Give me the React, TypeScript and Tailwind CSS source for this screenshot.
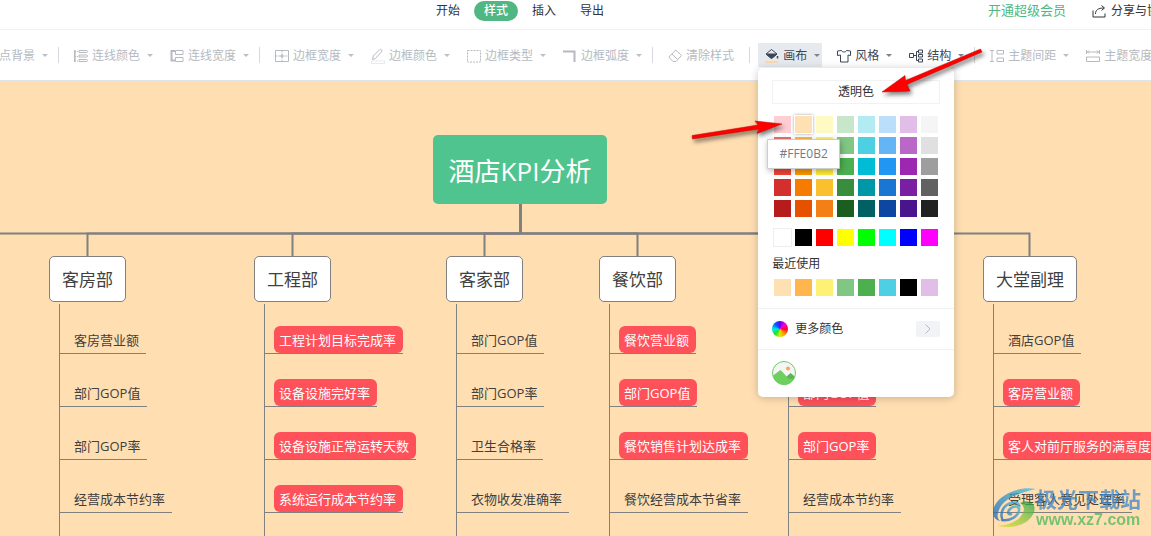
import type { ReactNode } from 'react';
import clsx from 'clsx';

const tabs = ['开始', '样式', '插入', '导出'];

const palette = [
  'bg-[#ffcdd2]', 'bg-[#ffe0b2]', 'bg-[#fff9c4]', 'bg-[#c8e6c9]', 'bg-[#b2ebf2]', 'bg-[#bbdefb]', 'bg-[#e1bee7]', 'bg-[#f5f5f5]',
  'bg-[#e57373]', 'bg-[#ffb74d]', 'bg-[#fff176]', 'bg-[#81c784]', 'bg-[#4dd0e1]', 'bg-[#64b5f6]', 'bg-[#ba68c8]', 'bg-[#e0e0e0]',
  'bg-[#f44336]', 'bg-[#ff9800]', 'bg-[#ffeb3b]', 'bg-[#4caf50]', 'bg-[#00bcd4]', 'bg-[#2196f3]', 'bg-[#9c27b0]', 'bg-[#9e9e9e]',
  'bg-[#d32f2f]', 'bg-[#f57c00]', 'bg-[#fbc02d]', 'bg-[#388e3c]', 'bg-[#0097a7]', 'bg-[#1976d2]', 'bg-[#7b1fa2]', 'bg-[#616161]',
  'bg-[#b71c1c]', 'bg-[#e65100]', 'bg-[#f57f17]', 'bg-[#1b5e20]', 'bg-[#006064]', 'bg-[#0d47a1]', 'bg-[#4a148c]', 'bg-[#212121]',
];

const basics = [
  'bg-[#ffffff]', 'bg-[#000000]', 'bg-[#ff0000]', 'bg-[#ffff00]', 'bg-[#00ff00]', 'bg-[#00ffff]', 'bg-[#0000ff]', 'bg-[#ff00ff]',
];

const recent = [
  'bg-[#ffe0b2]', 'bg-[#ffb74d]', 'bg-[#fff176]', 'bg-[#81c784]', 'bg-[#4caf50]', 'bg-[#4dd0e1]', 'bg-[#000000]', 'bg-[#e1bee7]',
];

type Leaf = { text: string; hot?: boolean };
type Branch = { pos: string; title?: string; leaves: Leaf[] };

const branches: Branch[] = [
  {
    pos: 'left-[49px]',
    title: '客房部',
    leaves: [{ text: '客房营业额' }, { text: '部门GOP值' }, { text: '部门GOP率' }, { text: '经营成本节约率' }],
  },
  {
    pos: 'left-[254px]',
    title: '工程部',
    leaves: [
      { text: '工程计划目标完成率', hot: true },
      { text: '设备设施完好率', hot: true },
      { text: '设备设施正常运转天数', hot: true },
      { text: '系统运行成本节约率', hot: true },
    ],
  },
  {
    pos: 'left-[446px]',
    title: '客家部',
    leaves: [{ text: '部门GOP值' }, { text: '部门GOP率' }, { text: '卫生合格率' }, { text: '衣物收发准确率' }],
  },
  {
    pos: 'left-[599px]',
    title: '餐饮部',
    leaves: [
      { text: '餐饮营业额', hot: true },
      { text: '部门GOP值', hot: true },
      { text: '餐饮销售计划达成率', hot: true },
      { text: '餐饮经营成本节省率' },
    ],
  },
  {
    pos: 'left-[778px]',
    leaves: [{ text: '部门GOP值', hot: true }, { text: '部门GOP率', hot: true }, { text: '经营成本节约率' }],
  },
  {
    pos: 'left-[983px]',
    title: '大堂副理',
    leaves: [
      { text: '酒店GOP值' },
      { text: '客房营业额', hot: true },
      { text: '客人对前厅服务的满意度', hot: true },
      { text: '受理客人意见处理率' },
    ],
  },
];

// x of every branch's drop line
const drops = [-60, 87.5, 292.5, 484.5, 637.5, 816.5, 1029.5];

function Icon({ children }: { children: ReactNode }) {
  return (
    <svg className="h-[14px] w-[14px] shrink-0 overflow-visible" viewBox="0 0 14 14" fill="none" stroke="currentColor" aria-hidden="true">
      {children}
    </svg>
  );
}

const icons = {
  background: <path d="M1 1.5h12v11H1z" />,
  lineColor: (
    <>
      <path d="M.8 1v12" strokeWidth="1.600" />
      <path d="M1 2.500h4M1 7.500h4M1 12h4" strokeDasharray="1 1" />
      <path d="M5 1.500h7.500q1 0 1 1t-1 1H5zM5 6h7.500q1 0 1 1t-1 1H5zM5 10.500h7.500q1 0 1 1t-1 1H5z" />
    </>
  ),
  lineWidth: (
    <>
      <path d="M5 2H1.500v9.500H5" strokeWidth="2" />
      <path d="M5.500 1.500H13v4H5.500zM5.500 8.500H13v4H5.500z" />
    </>
  ),
  borderWidth: (
    <>
      <path d="M.5 1.500h13v11H.5z" />
      <path d="M7 1.500v11M.5 7h13" strokeDasharray="2 1" />
      <path d="M5 7h4M7 5v4" />
    </>
  ),
  borderColor: (
    <>
      <path d="M1.500 10.500l.8-3.500L8.500.800a1.400 1.400 0 0 1 2 2L4.500 9.500z" />
      <path d="M.5 12h13v2.500H.5z" opacity="0.300" />
    </>
  ),
  borderType: <path d="M.5 1.500h13v11.500H.5z" strokeDasharray="2 1" />,
  borderArc: <path d="M0 2.500h11.500V13" strokeWidth="2" />,
  clear: (
    <>
      <path d="M7.800 1l5.700 5.500L8 12.500H5L.8 8z" />
      <path d="M4 5l5.500 5.500" />
    </>
  ),
  canvas: (
    <>
      <path d="M1 5L6.500.5l5.500 4.500L6.500 9.500z" />
      <path d="M1 5h11L6.500 9.500z" fill="currentColor" />
      <path d="M12.500 7v2.500" strokeWidth="1.500" />
      <path d="M0 13h13" stroke="#ffd9a3" strokeWidth="2" />
    </>
  ),
  shirt: <path d="M4.500 1.500L.5 2v4.500l3-.5v7h7.500V6l2.500.5V2l-4-.5C9 3.500 5 3.500 4.500 1.500z" strokeLinejoin="round" />,
  structure: (
    <path d="M.5 4.500h4v4h-4zM4.500 6.500h3M7.500 2.500v9M7.500 2.500h2M7.500 11.500h2M9.500 1h4v3h-4zM9.500 5.500h4v2.500h-4zM9.500 10h4v3h-4z" />
  ),
  spacing: (
    <>
      <path d="M0 1.500h4M0 12.500h4M2 2v10" />
      <path d="M7 1.500h6.500v3.500H7zM7 9h6.500v3.500H7z" />
    </>
  ),
  width: (
    <>
      <path d="M.5 1v4M13.500 1v4M1 3h12M3 1.500L1.500 3 3 4.500M11 1.500L12.500 3 11 4.500" />
      <path d="M.5 8h13v4.500H.5z" />
    </>
  ),
};

function ToolButton({
  icon,
  label,
  caret = true,
  active,
  enabled,
}: {
  icon: ReactNode;
  label: string;
  caret?: boolean;
  active?: boolean;
  enabled?: boolean;
}) {
  return (
    <button
      type="button"
      className={clsx(
        'flex h-6 shrink-0 items-center pt-px pl-[7px]',
        caret ? 'pr-[2px]' : 'pr-[7px]',
        active && 'bg-[#e6eaee]',
        enabled ? 'text-[#3d4656]' : 'text-[#b6babf]',
      )}
    >
      <Icon>{icon}</Icon>
      <span className="ml-1">{label}</span>
      {caret && (
        <svg
          className={clsx('ml-[7px] h-[3px] w-[6px]', enabled ? 'text-[#7d838d]' : 'text-[#bcc0c5]')}
          viewBox="0 0 6 3"
          fill="currentColor"
          aria-hidden="true"
        >
          <path d="M0 0h6L3 3z" />
        </svg>
      )}
    </button>
  );
}

function Divider() {
  return <span className="h-4 w-px shrink-0 bg-[#d5d8dc]" />;
}

function Swatches({ colors, label, selected }: { colors: string[]; label: string; selected?: number }) {
  return (
    <div className="grid grid-cols-8 gap-1 px-[2px]" role="group" aria-label={label}>
      {colors.map((color, i) => (
        <button
          key={color}
          type="button"
          aria-label={color.slice(4, -1)}
          className={clsx(
            'h-[17px]',
            color,
            color === 'bg-[#ffffff]' && 'outline outline-[#eeeeee]',
            selected === i && 'shadow-[0_0_3px_1px_rgba(0,0,0,0.35)] outline outline-white',
          )}
        />
      ))}
    </div>
  );
}

function CanvasPanel() {
  return (
    <div className="absolute top-[25px] left-0 w-[196px] rounded-[5px] bg-white text-[#333333] shadow-[0_1px_8px_rgba(0,0,0,0.22)]">
      <div className="px-[14px] pt-3 pb-3">
        <button type="button" className="mb-3 block h-6 w-full border border-[#f2f2f2] leading-[22px]">
          透明色
        </button>
        <Swatches colors={palette} label="颜色" selected={1} />
        <div className="mt-3">
          <Swatches colors={basics} label="标准色" />
        </div>
        <h3 className="mt-2 mb-[5px] leading-5">最近使用</h3>
        <Swatches colors={recent} label="最近使用" />
      </div>
      <button type="button" className="flex h-[41px] w-full items-center border-t border-[#f0f1f2] px-[14px]">
        <span className="h-4 w-4 rounded-full bg-[conic-gradient(#5a00ff,#ff00d0,#ff0030,#ff9000,#d8f000,#20e030,#00e8e0,#0060ff,#5a00ff)]" />
        <span className="ml-[7px]">更多颜色</span>
        <span className="ml-auto flex h-4 w-6 items-center justify-center rounded-[2px] bg-[#f1f3f6]">
          <svg className="h-[10px] w-[6px]" viewBox="0 0 6 10" fill="none" stroke="#b5bac2" aria-hidden="true">
            <path d="M.5.5L5 5 .5 9.500" />
          </svg>
        </span>
      </button>
      <div className="border-t border-[#f0f1f2] px-[14px] pt-[11px] pb-3">
        <button type="button" aria-label="图片" className="block h-6 w-6">
          <svg viewBox="0 0 24 24" aria-hidden="true">
            <defs>
              <clipPath id="photo">
                <circle cx="12" cy="12" r="11.500" />
              </clipPath>
            </defs>
            <g clipPath="url(#photo)">
              <path d="M0 0h24v24H0z" fill="#f5f5f5" />
              <path d="M13 17l5.500-5 6 5v8H13z" fill="#5bb653" />
              <path d="M-1 16l9.500-7L19 20v5H-1z" fill="#6ccf60" />
              <path d="M0 18h24v6H0z" fill="#6ccf60" />
              <circle cx="16" cy="7.500" r="2" fill="#f9a36b" />
            </g>
            <circle cx="12" cy="12" r="11.500" fill="none" stroke="#6ccf60" />
          </svg>
        </button>
      </div>
      <div
        role="tooltip"
        className="absolute top-[71px] left-[9px] flex h-[30px] w-[73px] items-center justify-center rounded-[1px] border border-[#cccccc] bg-white text-[#737a87] shadow-[1px_2px_6px_rgba(0,0,0,0.3)]"
      >
        #FFE0B2
      </div>
    </div>
  );
}

function BranchNode({ pos, title, leaves }: Branch) {
  return (
    <section className={clsx('absolute top-[175px] bottom-0 flex flex-col items-start whitespace-nowrap', pos)}>
      <h2
        className={clsx(
          'flex h-[46px] shrink-0 items-center px-3 pt-[2px] text-[17px]',
          title && 'rounded-[5px] border border-[#808080] bg-white',
        )}
      >
        {title}
      </h2>
      <ul
        className={clsx(
          'mt-[2px] ml-[10px] flex flex-1 flex-col items-start gap-[25px] border-l border-[#808080] text-[13px]',
          title ? 'pt-[22px]' : 'pt-[75px]',
        )}
      >
        {leaves.map((leaf) => (
          <li key={leaf.text} className="border-b border-[#808080] pl-[9px]">
            <span
              className={clsx(
                'block h-[27px] pr-[7px] pl-[5px] leading-7',
                leaf.hot && 'rounded-[6px] bg-[#ff515a] text-white',
              )}
            >
              {leaf.text}
            </span>
          </li>
        ))}
      </ul>
    </section>
  );
}

function Watermark() {
  return (
    <div className="absolute right-[10px] bottom-[7px] flex items-center opacity-75">
      <svg className="h-[42px] w-[44px]" viewBox="0 0 44 42" aria-hidden="true">
        <defs>
          <linearGradient id="wmBlue" x1="0" y1="1" x2="1" y2="0">
            <stop offset="0" stopColor="#1d62b5" />
            <stop offset="1" stopColor="#45c0e0" />
          </linearGradient>
          <linearGradient id="wmGreen" x1="0" y1="1" x2="1" y2="0">
            <stop offset="0" stopColor="#e8dc30" />
            <stop offset="0.600" stopColor="#7cc142" />
            <stop offset="1" stopColor="#1f9e50" />
          </linearGradient>
        </defs>
        <path d="M44 2C27-1 9 7 3 18c-4 8-2 14 5 16-2-2-3-4-2-8C8 17 17 10 27 7c6-2 11-4 17-5z" fill="url(#wmBlue)" />
        <path
          d="M10 33c8 1 15-3 17-9 1-5-5-6-9-2-3 3-2 6 1 5M10 31c-2-6 2-13 9-15 6-2 9 1 8 5"
          fill="none"
          stroke="url(#wmBlue)"
          strokeWidth="2.500"
          strokeLinecap="round"
        />
        <path d="M28 16c4-3 10-2 13 1 4 5 0 13-7 18-8 5-19 6-29 4 12-1 20-4 24-10 4-5 4-10-1-13z" fill="url(#wmGreen)" />
      </svg>
      <div className="flex flex-col">
        <strong className="text-[21px] leading-6 font-bold text-[#3f86cb]">极光下载站</strong>
        <span className="font-['Liberation_Sans',sans-serif] text-[16px] leading-[18px] font-bold text-[#4cb860]">www.xz7.com</span>
      </div>
    </div>
  );
}

function Arrows() {
  return (
    <svg
      className="pointer-events-none absolute inset-0 z-20 h-full w-full drop-shadow-[2px_3px_2px_rgba(0,0,0,0.5)]"
      fill="#ff0000"
      stroke="#b80808"
      strokeWidth="0.500"
      strokeLinejoin="round"
      aria-hidden="true"
    >
      <path d="M882 92L905 75.500L905.500 80.500L980.500 49L982 52L907 84.500L910 91Z" />
      <path d="M782 124L755 121L758 125L692 135.500L692.500 139L759 129L757 133.500Z" />
    </svg>
  );
}

export default function App() {
  return (
    <div className="relative flex min-h-screen flex-col overflow-hidden bg-white font-['Open_Sans','Noto_Sans_CJK_SC',sans-serif] text-xs text-[#333333]">
      <header className="flex h-[30px] items-start border-b border-[#f0f1f3] pl-[426px]">
        <nav className="flex gap-1 pt-px">
          {tabs.map((tab) => (
            <button
              key={tab}
              type="button"
              className={clsx('h-5 w-11 rounded-full', tab === '样式' && 'bg-[#50b783] font-medium text-white')}
            >
              {tab}
            </button>
          ))}
        </nav>
        <div className="ml-auto flex h-[22px] w-[163px] shrink-0 items-center overflow-hidden whitespace-nowrap">
          <a href="#vip" className="text-[13px] text-[#4cb984]">
            开通超级会员
          </a>
          <button type="button" className="ml-[26px] flex shrink-0 items-center gap-[5px]">
            <Icon>
              <path d="M1 6.500V13h12V9.500M3.500 10c0-4 2.500-6 8.500-6M9.500 1.500L12.500 4 9.500 6.500" />
            </Icon>
            分享与协作
          </button>
        </div>
      </header>

      <div className="relative z-10 -ml-[38px] flex h-[51px] items-center gap-2 border-b border-[#dfe5e8] bg-white whitespace-nowrap">
        <ToolButton icon={icons.background} label="节点背景" />
        <Divider />
        <ToolButton icon={icons.lineColor} label="连线颜色" />
        <ToolButton icon={icons.lineWidth} label="连线宽度" />
        <Divider />
        <ToolButton icon={icons.borderWidth} label="边框宽度" />
        <ToolButton icon={icons.borderColor} label="边框颜色" />
        <ToolButton icon={icons.borderType} label="边框类型" />
        <ToolButton icon={icons.borderArc} label="边框弧度" />
        <Divider />
        <ToolButton icon={icons.clear} label="清除样式" caret={false} />
        <Divider />
        <div className="relative shrink-0">
          <ToolButton icon={icons.canvas} label="画布" active enabled />
          <CanvasPanel />
        </div>
        <ToolButton icon={icons.shirt} label="风格" enabled />
        <ToolButton icon={icons.structure} label="结构" enabled />
        <Divider />
        <ToolButton icon={icons.spacing} label="主题间距" />
        <ToolButton icon={icons.width} label="主题宽度" />
      </div>

      <main className="relative flex-1 overflow-hidden bg-[#ffdfb2] text-[#404040]">
        <svg className="absolute inset-0 h-full w-full" fill="none" stroke="#808080" aria-hidden="true">
          {drops.map((x) => (
            <path key={x} d={`M520.5 152.500H${x}V175`} strokeWidth="2" />
          ))}
          <path d="M520.500 123v30" strokeWidth="3" />
        </svg>
        <h1 className="absolute top-[54px] left-[433px] flex h-[69px] w-[174px] items-center justify-center rounded-[5px] bg-[#50c48f] pt-1 text-[26px] whitespace-nowrap text-white">
          酒店KPI分析
        </h1>
        {branches.map((branch) => (
          <BranchNode key={branch.pos} {...branch} />
        ))}
        <Watermark />
      </main>

      <Arrows />
    </div>
  );
}
